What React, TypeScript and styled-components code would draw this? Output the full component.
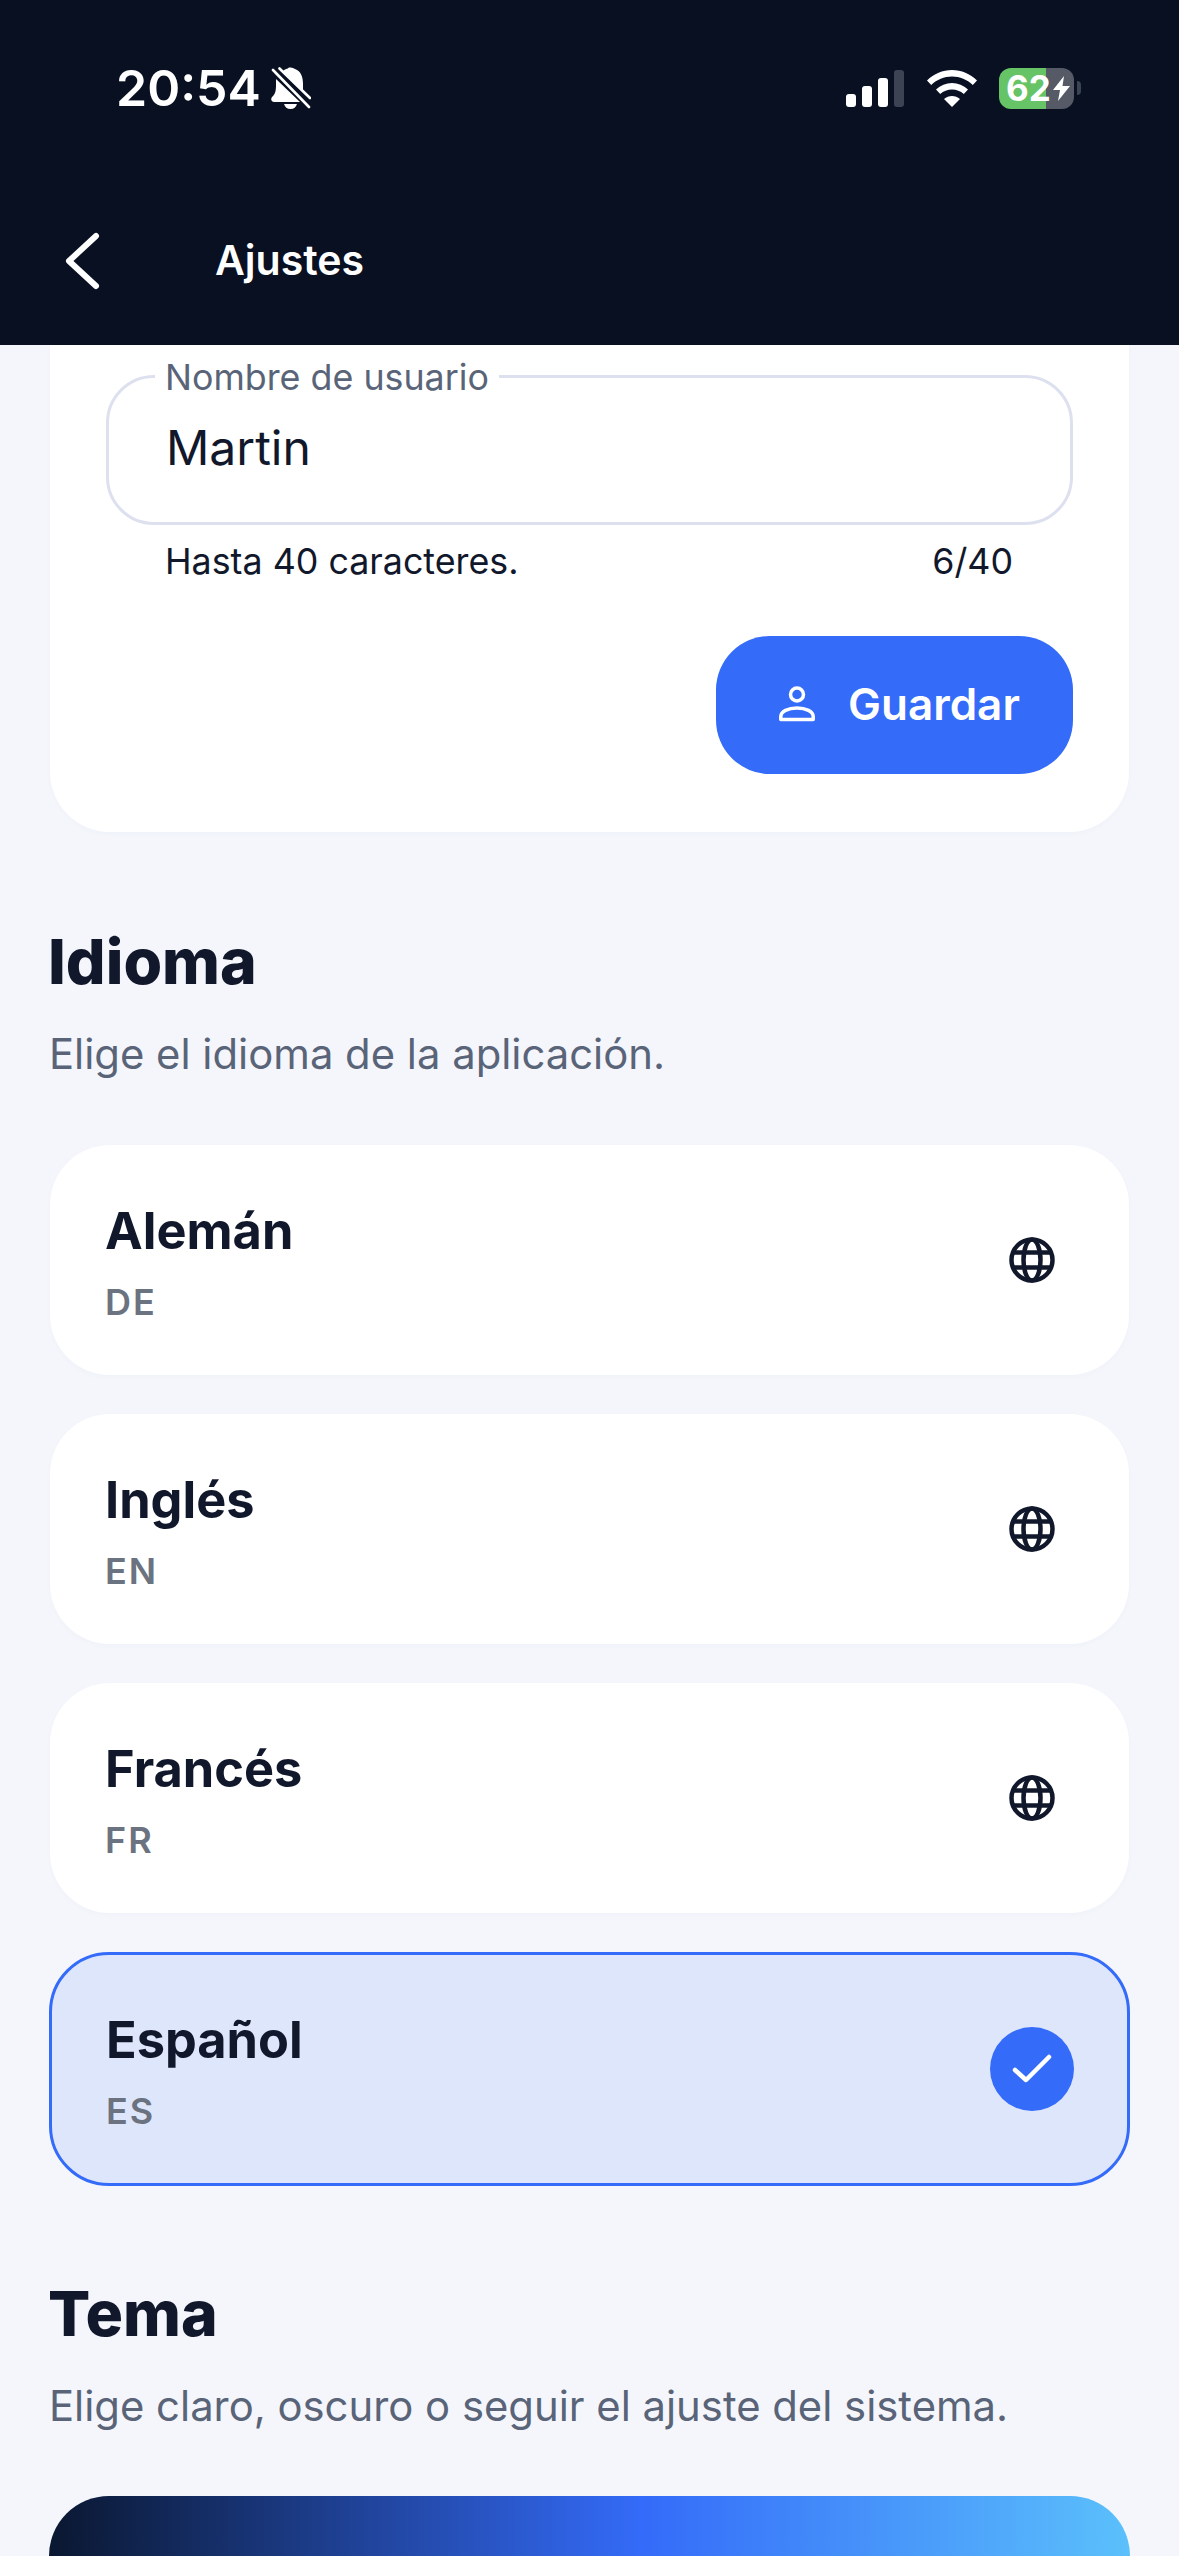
import React from "react";
import styled, { createGlobalStyle } from "styled-components";

const GlobalStyle = createGlobalStyle`
  html, body {
    margin: 0;
    padding: 0;
    background: #f4f6fc;
    font-family: Inter, "Liberation Sans", sans-serif;
  }
`;

const Screen = styled.div`
  width: 1179px;
  height: 2556px;
  overflow: hidden;
  display: flex;
  flex-direction: column;
  background: #f4f6fc;
`;

const Header = styled.header`
  flex: none;
  height: 345px;
  background: #081022;
  color: #fff;
  display: flex;
  flex-direction: column;
`;

const StatusBar = styled.div`
  height: 175px;
  padding: 67px 98px 0 116px;
  box-sizing: border-box;
  display: flex;
  justify-content: space-between;
  align-items: flex-start;
`;

const TimeGroup = styled.div`
  display: flex;
  align-items: center;
  gap: 10px;
  height: 42px;
`;

const Time = styled.span`
  font-size: 50px;
  font-weight: 600;
  line-height: 42px;
`;

const StatusIcons = styled.div`
  display: flex;
  align-items: center;
  height: 42px;
`;

const Battery = styled.div`
  width: 75px;
  height: 41px;
  margin-left: 22px;
  border-radius: 12px;
  background: linear-gradient(90deg, #66c466 47px, #555a66 47px);
  display: flex;
  align-items: center;
  padding-left: 7px;
  box-sizing: border-box;
  font-size: 35px;
  font-weight: 700;
  line-height: 41px;
`;

const BatteryNub = styled.div`
  width: 4px;
  height: 14px;
  margin-left: 3px;
  border-radius: 0 4px 4px 0;
  background: #3c4353;
`;

const NavBar = styled.div`
  display: flex;
  align-items: center;
  padding-left: 64px;
  height: 170px;
`;

const NavTitle = styled.h1`
  margin: 0 0 0 115px;
  font-size: 41px;
  font-weight: 600;
  line-height: 46px;
`;

const Content = styled.main`
  flex: 1;
  padding: 0 50px;
  display: flex;
  flex-direction: column;
`;

const ProfileCard = styled.section`
  background: #fff;
  border-radius: 0 0 60px 60px;
  padding: 30px 56px 58px;
  box-shadow: 0 2px 6px rgba(30, 50, 110, 0.02);
  display: flex;
  flex-direction: column;
`;

const Field = styled.div`
  position: relative;
  height: 150px;
  border: 3px solid #dde1ef;
  border-radius: 48px;
  box-sizing: border-box;
  display: flex;
  align-items: center;
  padding: 0 0 6px 57px;
`;

const FieldLabel = styled.label`
  position: absolute;
  left: 46px;
  top: -21px;
  padding: 0 10px;
  background: #fff;
  font-size: 35.8px;
  line-height: 40px;
  color: #5a6478;
`;

const FieldValue = styled.span`
  font-size: 48px;
  color: #12182b;
`;

const FieldHint = styled.div`
  display: flex;
  justify-content: space-between;
  padding: 14px 60px 0 59px;
  font-size: 35.8px;
  line-height: 44px;
  color: #12182b;
`;

const SaveButton = styled.button`
  align-self: flex-end;
  margin-top: 53px;
  width: 357px;
  height: 138px;
  border: 0;
  border-radius: 54px;
  background: #346bf9;
  color: #fff;
  font: 600 44px Inter, sans-serif;
  display: flex;
  align-items: center;
  gap: 33px;
  padding: 0 0 3px 63px;
`;

const SectionTitle = styled.h2<{ $top: number }>`
  margin: ${(p) => p.$top}px 0 0 -2px;
  font-size: 62.5px;
  font-weight: 800;
  line-height: 76px;
  color: #12182b;
`;

const SectionText = styled.p`
  margin: 31px 0 0 -1px;
  font-size: 41.8px;
  line-height: 48px;
  color: #5a6478;
`;

const LanguageList = styled.div`
  margin-top: 67px;
  display: flex;
  flex-direction: column;
  gap: 39px;
`;

const LanguageRow = styled.div<{ $selected?: boolean }>`
  height: ${(p) => (p.$selected ? 234 : 230)}px;
  margin: 0 ${(p) => (p.$selected ? -1 : 0)}px;
  box-sizing: border-box;
  border-radius: 60px;
  padding: 0 ${(p) => (p.$selected ? 53 : 74)}px 0 ${(p) => (p.$selected ? 54 : 55)}px;
  background: ${(p) => (p.$selected ? "#dee6fb" : "#fff")};
  border: ${(p) => (p.$selected ? "3px solid #346bf9" : "0")};
  box-shadow: ${(p) => (p.$selected ? "none" : "0 2px 6px rgba(30, 50, 110, 0.02)")};
  display: flex;
  align-items: center;
  justify-content: space-between;
`;

const LanguageText = styled.div`
  padding-top: 5px;
`;

const LanguageName = styled.div`
  font-size: 50.5px;
  font-weight: 700;
  line-height: 56px;
  color: #12182b;
`;

const LanguageCode = styled.div`
  margin-top: 22px;
  font-size: 36px;
  font-weight: 600;
  line-height: 42px;
  letter-spacing: 2px;
  color: #6b7280;
`;

const CheckBadge = styled.div`
  width: 84px;
  height: 84px;
  border-radius: 50%;
  background: #346bf9;
  display: flex;
  align-items: center;
  justify-content: center;
`;

const ThemeBanner = styled.div`
  margin: 66px -1px 0;
  height: 240px;
  flex: none;
  border-radius: 60px;
  background: linear-gradient(90deg, #0a1730 0%, #346bf9 55%, #5bc0fb 100%);
`;

const BellOffIcon = () => (
  <svg width="40" height="42" viewBox="0 0 40 42">
    <path
      fill="#fff"
      d="M5 12 29 35H3.5C0 35-.8 31.5 1.5 29.5 4.5 27 5 23 5 18ZM12 4C14 2 16.5 2 18 .5 20 .5 22 .5 24 2 30 4 32 10 32 17V25ZM13 37H26C25 40 23 42 19.500 42 16 42 14 40 13 37Z"
    />
    <path stroke="#081022" strokeWidth="5" d="M3 3 39 39" />
    <path stroke="#fff" strokeWidth="2.600" strokeLinecap="round" d="M2 3 38 40M8.500 1.500 39 31" fill="none" />
  </svg>
);

const SignalIcon = () => (
  <svg width="58" height="37" viewBox="0 0 58 37">
    <rect x="0" y="24" width="10" height="13" rx="3" fill="#fff" />
    <rect x="16" y="16" width="10" height="21" rx="3" fill="#fff" />
    <rect x="32" y="8" width="10" height="29" rx="3" fill="#fff" />
    <rect x="48" y="0" width="10" height="37" rx="3" fill="#3c4353" />
  </svg>
);

const WifiIcon = () => (
  <svg width="50" height="37" viewBox="0 0 50 37" style={{ marginLeft: 23 }}>
    <path
      fill="#fff"
      d="M25 0C34.500 0 43 3.800 50 10.500L45.800 15C40 9.500 33 6.500 25 6.500S10 9.500 4.200 15L0 10.500C7 3.800 15.500 0 25 0Z"
    />
    <path
      fill="#fff"
      d="M25 13C31 13 36.500 15.300 41 19.500L36.800 24C33.500 21 29.500 19.500 25 19.500S16.500 21 13.200 24L9 19.500C13.500 15.300 19 13 25 13Z"
    />
    <path fill="#fff" d="M25 26C28 26 30.500 27 33 29L25 37 17 29C19.500 27 22 26 25 26Z" />
  </svg>
);

const BoltIcon = () => (
  <svg width="17" height="25" viewBox="0 0 17 25" style={{ marginLeft: 2 }}>
    <path fill="#fff" d="M11 0 0 14H7L5 25 17 10H9.500Z" />
  </svg>
);

const BackIcon = () => (
  <svg width="36" height="60" viewBox="0 0 36 60">
    <path d="M32 6 5 31 32 56" fill="none" stroke="#fff" strokeWidth="6" strokeLinecap="round" strokeLinejoin="round" />
  </svg>
);

const PersonIcon = () => (
  <svg width="36" height="36" viewBox="0 0 36 36" fill="none" stroke="#fff" strokeWidth="3.500">
    <circle cx="18" cy="8.500" r="6.500" />
    <path strokeLinejoin="round" d="M1.800 33.500V30.500C1.800 25.500 9 22 18 22S34.200 25.500 34.200 30.500V33.500Z" />
  </svg>
);

const GlobeIcon = () => (
  <svg width="46" height="46" viewBox="0 0 46 46" fill="none" stroke="#12182b" strokeWidth="4.500">
    <circle cx="23" cy="23" r="20.500" />
    <ellipse cx="23" cy="23" rx="8.500" ry="20.500" />
    <path d="M4 15.500H42M4 30.500H42" />
  </svg>
);

const CheckIcon = () => (
  <svg width="40" height="32" viewBox="0 0 40 32">
    <path d="M3 17 14 27 37 4" fill="none" stroke="#fff" strokeWidth="4.500" strokeLinecap="round" strokeLinejoin="round" />
  </svg>
);

const languages = [
  { name: "Alemán", code: "DE" },
  { name: "Inglés", code: "EN" },
  { name: "Francés", code: "FR" },
  { name: "Español", code: "ES", selected: true },
];

const App: React.FC = () => {
  return (
    <>
      <GlobalStyle />
      <Screen>
        <Header>
          <StatusBar>
            <TimeGroup>
              <Time>20:54</Time>
              <BellOffIcon />
            </TimeGroup>
            <StatusIcons>
              <SignalIcon />
              <WifiIcon />
              <Battery>
                62
                <BoltIcon />
              </Battery>
              <BatteryNub />
            </StatusIcons>
          </StatusBar>
          <NavBar>
            <BackIcon />
            <NavTitle>Ajustes</NavTitle>
          </NavBar>
        </Header>
        <Content>
          <ProfileCard>
            <Field>
              <FieldLabel>Nombre de usuario</FieldLabel>
              <FieldValue>Martin</FieldValue>
            </Field>
            <FieldHint>
              <span>Hasta 40 caracteres.</span>
              <span>6/40</span>
            </FieldHint>
            <SaveButton>
              <PersonIcon />
              Guardar
            </SaveButton>
          </ProfileCard>

          <SectionTitle $top={91}>Idioma</SectionTitle>
          <SectionText>Elige el idioma de la aplicación.</SectionText>
          <LanguageList>
            {languages.map((lang) => (
              <LanguageRow key={lang.code} $selected={lang.selected}>
                <LanguageText>
                  <LanguageName>{lang.name}</LanguageName>
                  <LanguageCode>{lang.code}</LanguageCode>
                </LanguageText>
                {lang.selected ? (
                  <CheckBadge>
                    <CheckIcon />
                  </CheckBadge>
                ) : (
                  <GlobeIcon />
                )}
              </LanguageRow>
            ))}
          </LanguageList>

          <SectionTitle $top={89}>Tema</SectionTitle>
          <SectionText>Elige claro, oscuro o seguir el ajuste del sistema.</SectionText>
          <ThemeBanner />
        </Content>
      </Screen>
    </>
  );
};

export default App;
